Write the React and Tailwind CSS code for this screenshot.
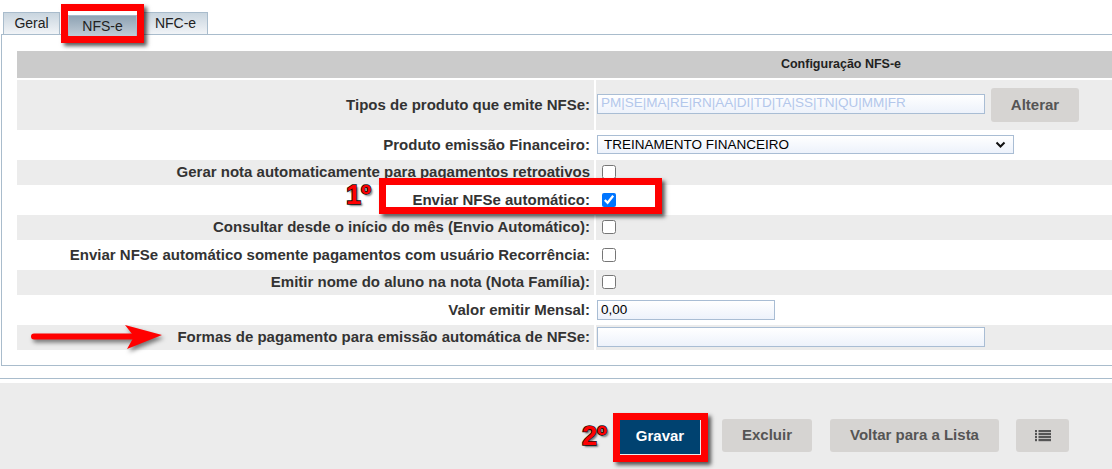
import React from 'react';

const rows = [
  { label: 'Gerar nota automaticamente para pagamentos retroativos', type: 'check', gray: true },
  { label: 'Enviar NFSe automático:', type: 'check', checked: true },
  { label: 'Consultar desde o início do mês (Envio Automático):', type: 'check', gray: true },
  { label: 'Enviar NFSe automático somente pagamentos com usuário Recorrência:', type: 'check' },
  { label: 'Emitir nome do aluno na nota (Nota Família):', type: 'check', gray: true },
  { label: 'Valor emitir Mensal:', type: 'valor' },
  { label: 'Formas de pagamento para emissão automática de NFSe:', type: 'formas', gray: true },
];

const inputCls =
  'h-[20px] border border-[#a9bdd4] bg-linear-to-b from-white to-[#edf2fb] px-[3px] text-[13.5px] font-normal outline-none';

const Redbox = ({ className }) => (
  <div
    className={`absolute border-[7px] border-[#ff0000] shadow-[3px_3px_4px_rgba(0,0,0,0.65)] pointer-events-none ${className}`}
  />
);

const Ordinal = ({ children, className }) => (
  <div
    className={`absolute text-[27px] font-bold leading-none text-[#ff0000] [-webkit-text-stroke:1.6px_#111] [paint-order:stroke_fill] [text-shadow:2px_2px_2px_rgba(0,0,0,0.5)] ${className}`}
  >
    {children}
  </div>
);

const Field = ({ row }) => {
  if (row.type === 'check') {
    return (
      <input
        type="checkbox"
        defaultChecked={row.checked}
        className="m-0 ml-[5px] w-[14px] h-[14px]"
      />
    );
  }
  if (row.type === 'valor') {
    return <input className={`${inputCls} w-[178px] text-black`} defaultValue="0,00" />;
  }
  return <input className={`${inputCls} w-[388px] text-black`} defaultValue="" />;
};

export default function App() {
  return (
    <div className="relative w-[1112px] h-[469px] overflow-hidden bg-white text-[#333] font-['Liberation_Sans',Arial,sans-serif]">
      {/* tabs */}
      <div className="flex items-end h-[34px] pl-[3px] text-[#222]">
        <div className="w-[57px] h-[22px] border border-b-0 border-[#a9bccc] bg-linear-to-b from-[#c9d5df] to-[#f1f4f7] text-[14px] flex items-center justify-center">
          Geral
        </div>
        <div className="ml-[8px] w-[69px] h-[22px] translate-y-[3px] border border-b-0 border-[#a9bccc] bg-linear-to-b from-[#8fa3b4] to-[#c3ced8] text-[14px] flex items-center justify-center">
          NFS-e
        </div>
        <div className="ml-[6px] w-[65px] h-[22px] border border-b-0 border-[#a9bccc] bg-linear-to-b from-[#c9d5df] to-[#f1f4f7] text-[14px] flex items-center justify-center">
          NFC-e
        </div>
      </div>

      {/* panel */}
      <div className="ml-[1px] border-l border-y border-[#a9bccc] pt-[16px] pl-[15px] pb-[15px]">
        <div className="flex flex-col gap-[2px]">
          <div className="grid grid-cols-[577px_1fr] h-[27px] items-center bg-[#cbcbcb] text-[12.5px] font-bold text-[#222]">
            <div />
            <div className="text-center pr-[24px]">Configuração NFS-e</div>
          </div>

          <div className="grid grid-cols-[577px_1fr] gap-x-[2px] h-[50px] text-[15px] font-bold">
            <div className="bg-[#ececec] flex items-center justify-end pr-[4px]">
              Tipos de produto que emite NFSe:
            </div>
            <div className="bg-[#ececec] flex items-center pl-[1px]">
              <input
                readOnly
                className={`${inputCls} w-[388px] h-[19px] text-[#b3c7eb] -mt-[3px]`}
                value="PM|SE|MA|RE|RN|AA|DI|TD|TA|SS|TN|QU|MM|FR"
              />
              <button className="ml-[6px] w-[88px] h-[34px] rounded-[3px] bg-[#d6d4d2] text-[#555] text-[15px] font-bold">
                Alterar
              </button>
            </div>
          </div>

          <div className="grid grid-cols-[577px_1fr] gap-x-[2px] h-[25.5px] text-[15px] font-bold">
            <div className="flex items-center justify-end pr-[4px]">Produto emissão Financeiro:</div>
            <div className="flex items-center pl-[1px]">
              <div className="relative w-[417px] h-[19px] border border-[#a9bdd4] bg-linear-to-b from-white to-[#edf2fb] flex items-center pl-[6px] text-[13.5px] font-normal text-black">
                TREINAMENTO FINANCEIRO
                <svg
                  className="absolute right-[7px] top-[5px]"
                  width="11"
                  height="8"
                  viewBox="0 0 11 8"
                >
                  <path d="M1.5 1.5 L5.5 5.5 L9.5 1.5" fill="none" stroke="#111" strokeWidth="2" />
                </svg>
              </div>
            </div>
          </div>

          {rows.map((row) => (
            <div
              key={row.label}
              className="grid grid-cols-[577px_1fr] gap-x-[2px] h-[25.5px] text-[15px] font-bold"
            >
              <div className={`flex items-center justify-end pr-[4px] ${row.gray ? 'bg-[#ececec]' : ''}`}>
                {row.label}
              </div>
              <div className={`flex items-center pl-[1px] ${row.gray ? 'bg-[#ececec]' : ''}`}>
                <Field row={row} />
              </div>
            </div>
          ))}
        </div>
      </div>

      <div className="mt-[12px] h-[1px] bg-[#a9bccc]" />

      {/* footer */}
      <div className="mt-[4px] h-[90px] bg-[#ececec] flex items-start pt-[36px] pl-[620px] text-[15px] font-bold">
        <button className="w-[80px] h-[35px] bg-[#004270] text-white">Gravar</button>
        <button className="ml-[22px] w-[90px] h-[33px] rounded-[3px] bg-[#d6d4d2] text-[#555]">Excluir</button>
        <button className="ml-[18px] w-[169px] h-[33px] rounded-[3px] bg-[#d6d4d2] text-[#555]">
          Voltar para a Lista
        </button>
        <button className="ml-[17px] w-[53px] h-[33px] rounded-[3px] bg-[#d6d4d2] flex items-center justify-center">
          <svg width="16" height="12" viewBox="0 0 16 12">
            {[0, 3, 6, 9].map((y) => (
              <g key={y} fill="#555">
                <rect x="0" y={y} width="2" height="2.2" />
                <rect x="3.5" y={y} width="12.5" height="2.2" />
              </g>
            ))}
          </svg>
        </button>
      </div>

      {/* annotations */}
      <Redbox className="left-[61px] top-[4px] w-[83px] h-[39px]" />
      <Redbox className="left-[379px] top-[178px] w-[283px] h-[36px]" />
      <Ordinal className="left-[346px] top-[182px]">1º</Ordinal>
      <Redbox className="left-[613px] top-[413px] w-[95px] h-[49px]" />
      <Ordinal className="left-[582px] top-[423px]">2º</Ordinal>
      <svg
        className="absolute left-0 top-[318px] drop-shadow-[2px_3px_2px_rgba(0,0,0,0.5)]"
        width="175"
        height="40"
        viewBox="0 0 175 40"
      >
        <line x1="34" y1="18.5" x2="135" y2="18.5" stroke="#ff0000" strokeWidth="6" strokeLinecap="round" />
        <path d="M125 7 L162 17 L127 31 L134 18.5 Z" fill="#ff0000" />
      </svg>
    </div>
  );
}
